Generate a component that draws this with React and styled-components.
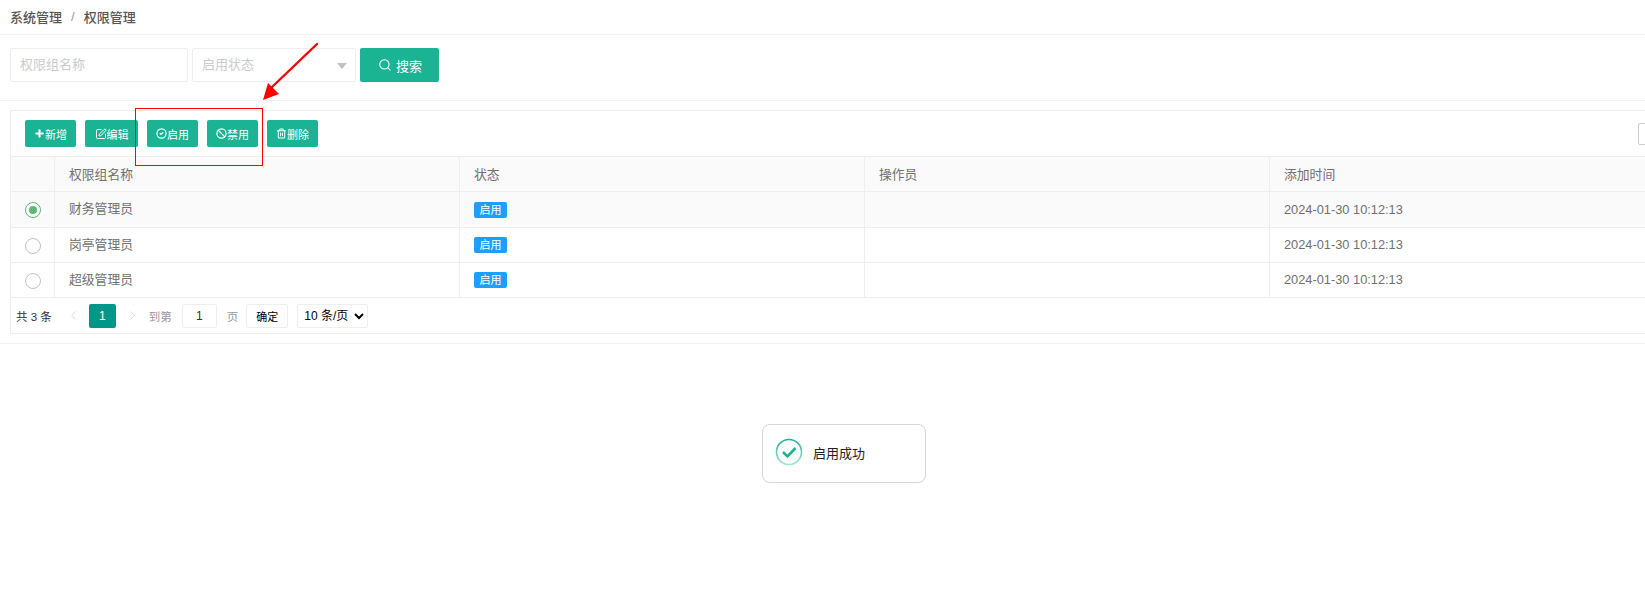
import React from 'react';
import styled, { createGlobalStyle } from 'styled-components';
import { Plus, SquarePen, CircleCheck, Ban, Trash2, Search, ChevronLeft, ChevronRight } from 'lucide-react';

const Global = createGlobalStyle`
  * { box-sizing: border-box; }
  html, body { margin: 0; padding: 0; background: #fff; height: 100%; overflow: hidden; }
  body { font-family: "Liberation Sans", "Noto Sans CJK SC", sans-serif; font-size: 13px; color: #666; }
`;

const Page = styled.div`
  position: relative;
  width: 1645px;
  height: 594px;
  overflow: hidden;
`;
const Breadcrumb = styled.div`
  height: 35px;
  padding: 0 10px 1px;
  border-bottom: 1px solid #f2f2f2;
  display: flex;
  align-items: center;
  font-size: 13px;
  color: #555;
`;
const Crumb = styled.span`font-weight: 500;`;
const CrumbSep = styled.span`
  margin: 0 9px 0 9px;
  color: #999;
`;
const SearchBar = styled.div`
  display: flex;
  gap: 4px;
  padding: 13px 10px 18px;
  border-bottom: 1px solid #f2f2f2;
  height: 66px;
`;
const TextInput = styled.input`
  width: ${p => p.$w}px;
  height: 34px;
  border: 1px solid #eee;
  border-radius: 2px;
  padding: 0 0 1px 9px;
  font: 13px "Liberation Sans", "Noto Sans CJK SC", sans-serif;
  outline: none;
  &::placeholder { color: #ccc; opacity: 1; }
`;
const SelectWrap = styled.div`
  position: relative;
  display: flex;
`;
const Caret = styled.i`
  position: absolute;
  right: 9px;
  top: 15px;
  border: 5.5px solid transparent;
  border-top: 6px solid #c2c2c2;
  border-bottom: 0;
`;
const SearchButton = styled.button`
  width: 79px;
  height: 34px;
  background: #1ab394;
  color: #fff;
  border: 0;
  border-radius: 2px;
  display: flex;
  align-items: center;
  justify-content: center;
  gap: 4px;
  font: 13px "Liberation Sans", "Noto Sans CJK SC", sans-serif;
  padding: 0 0 0 1px;
`;
const Section = styled.div`
  padding: 9px 0 9px 10px;
  border-bottom: 1px solid #f2f2f2;
`;
const Card = styled.div`
  width: 1680px;
  border: 1px solid #eee;
`;
const Toolbar = styled.div`
  display: flex;
  align-items: center;
  gap: 9px;
  height: 45px;
  padding-left: 14px;
  position: relative;
`;
const ToolButton = styled.button`
  width: ${p => p.$w || 51}px;
  height: 27px;
  background: #1ab394;
  color: #fff;
  border: 0;
  border-radius: 2px;
  padding: 0;
  display: flex;
  align-items: center;
  justify-content: center;
  font: 11px "Liberation Sans", "Noto Sans CJK SC", sans-serif;
`;
const ColumnsToggle = styled.div`
  position: absolute;
  left: 1627px;
  top: 12px;
  width: 30px;
  height: 22px;
  border: 1px solid #ccc;
  border-radius: 2px;
`;
const Row = styled.div`
  display: grid;
  grid-template-columns: 44px 405px 405px 405px 405px;
  height: ${p => p.$h}px;
  border-top: ${p => (p.$top ? '1px solid #eee' : '0')};
  border-bottom: 1px solid #eee;
  background: ${p => (p.$shaded ? '#fafafa' : '#fff')};
`;
const Cell = styled.div`
  display: flex;
  align-items: center;
  padding-left: ${p => (p.$center ? 0 : 14)}px;
  padding-bottom: ${p => (p.$center ? 0 : p.$lift || 0)}px;
  justify-content: ${p => (p.$center ? 'center' : 'flex-start')};
  border-right: 1px solid #eee;
  font-size: 12.8px;
  color: #707070;
`;
const Radio = styled.span`
  width: 16px;
  height: 16px;
  margin-top: 1px;
  border-radius: 50%;
  border: 1px solid ${p => (p.$on ? '#5fb878' : '#c2c2c2')};
  background: #fff;
  display: flex;
  align-items: center;
  justify-content: center;
  &::after {
    content: '';
    display: ${p => (p.$on ? 'block' : 'none')};
    width: 8px;
    height: 8px;
    border-radius: 50%;
    background: #5fb878;
  }
`;
const Badge = styled.span`
  width: 33px;
  height: 16px;
  background: #1e9fff;
  color: #fff;
  border-radius: 2px;
  font-size: 11px;
  line-height: 16px;
  text-align: center;
`;
const Pager = styled.div`
  height: 35px;
  display: flex;
  align-items: center;
  padding-left: 5px;
  font-size: 11px;
  color: #333;
`;
const PagerText = styled.span`
  color: ${p => p.$c || '#999'};
  margin-left: ${p => p.$ml || 0}px;
  font-size: 11.5px;
`;
const Arrow = styled.span`
  display: flex;
  margin-left: ${p => p.$ml}px;
  color: #ccc;
`;
const CurrentPage = styled.span`
  width: 27px;
  height: 24px;
  margin-left: 8px;
  background: #009688;
  color: #fff;
  border-radius: 2px;
  display: flex;
  align-items: center;
  justify-content: center;
  font-size: 12px;
`;
const PageInput = styled.input`
  width: 35px;
  height: 24px;
  margin-left: 10px;
  border: 1px solid #eee;
  border-radius: 2px;
  text-align: center;
  font: 12px "Liberation Sans", sans-serif;
  color: #333;
  padding: 0;
  outline: none;
`;
const Confirm = styled.button`
  width: 42px;
  height: 24px;
  margin-left: 8px;
  background: #fff;
  border: 1px solid #eee;
  border-radius: 2px;
  font: 11px "Liberation Sans", "Noto Sans CJK SC", sans-serif;
  color: #000;
  padding: 0;
`;
const PageSize = styled.select`
  width: 71px;
  height: 24px;
  margin-left: 9px;
  background: #fff;
  border: 1px solid #eee;
  border-radius: 2px;
  font: 12px "Liberation Sans", "Noto Sans CJK SC", sans-serif;
  color: #000;
  padding: 0 0 0 2px;
  outline: none;
`;
const Highlight = styled.div`
  position: absolute;
  left: 135px;
  top: 108px;
  width: 128px;
  height: 58px;
  border: 1px solid #f00;
  pointer-events: none;
`;
const ArrowMark = styled.svg`
  position: absolute;
  left: 255px;
  top: 36px;
`;
const Toast = styled.div`
  position: absolute;
  left: 762px;
  top: 424px;
  width: 164px;
  height: 59px;
  background: #fff;
  border: 1px solid #d6d6d6;
  border-radius: 8px;
  display: flex;
  align-items: center;
  padding: 0 0 3px 12px;
  gap: 10px;
  font-size: 13px;
  color: #222;
`;

const rows = [
  { name: '财务管理员', on: true, h: 36 },
  { name: '岗亭管理员', h: 35 },
  { name: '超级管理员', h: 35 },
];

const tools = [
  { label: '新增', Icon: Plus, w: 51, sw: 4.5, s: 11 },
  { label: '编辑', Icon: SquarePen, w: 53, sw: 2, s: 12 },
  { label: '启用', Icon: CircleCheck, w: 51, sw: 2.6, s: 11 },
  { label: '禁用', Icon: Ban, w: 51, sw: 2.6, s: 11 },
  { label: '删除', Icon: Trash2, w: 51, sw: 2.2, s: 11 },
];

export default function App() {
  return (
    <Page>
      <Global />
      <Breadcrumb>
        <Crumb>系统管理</Crumb>
        <CrumbSep>/</CrumbSep>
        <Crumb>权限管理</Crumb>
      </Breadcrumb>
      <SearchBar>
        <TextInput $w={178} placeholder="权限组名称" />
        <SelectWrap>
          <TextInput $w={164} placeholder="启用状态" readOnly />
          <Caret />
        </SelectWrap>
        <SearchButton><Search size={14} strokeWidth={1.8} />搜索</SearchButton>
      </SearchBar>
      <Section>
        <Card>
          <Toolbar>
            {tools.map(({ label, Icon, w, sw, s }) => (
              <ToolButton key={label} $w={w}><Icon size={s} strokeWidth={sw} />{label}</ToolButton>
            ))}
            <ColumnsToggle />
          </Toolbar>
          <Row $h={36} $top $shaded>
            <Cell $center />
            <Cell $lift={2}>权限组名称</Cell>
            <Cell $lift={2}>状态</Cell>
            <Cell $lift={2}>操作员</Cell>
            <Cell $lift={2}>添加时间</Cell>
          </Row>
          {rows.map(r => (
            <Row key={r.name} $h={r.h} $shaded={r.on}>
              <Cell $center><Radio $on={r.on} /></Cell>
              <Cell $lift={4}>{r.name}</Cell>
              <Cell><Badge>启用</Badge></Cell>
              <Cell />
              <Cell $lift={1}>2024-01-30 10:12:13</Cell>
            </Row>
          ))}
          <Pager>
            <PagerText $c="#333">共 3 条</PagerText>
            <Arrow $ml={14}><ChevronLeft size={15} strokeWidth={1.2} /></Arrow>
            <CurrentPage>1</CurrentPage>
            <Arrow $ml={9}><ChevronRight size={15} strokeWidth={1.2} /></Arrow>
            <PagerText $ml={9}>到第</PagerText>
            <PageInput defaultValue="1" />
            <PagerText $ml={10}>页</PagerText>
            <Confirm>确定</Confirm>
            <PageSize defaultValue="10">
              <option value="10">10 条/页</option>
              <option value="20">20 条/页</option>
            </PageSize>
          </Pager>
        </Card>
      </Section>
      <Highlight />
      <ArrowMark width="70" height="70" viewBox="0 0 70 70">
        <line x1="62" y1="8" x2="16" y2="52" stroke="#f00" strokeWidth="2.4" strokeLinecap="round" />
        <polygon points="8,64 13,47 24,58" fill="#f00" />
      </ArrowMark>
      <Toast>
        <svg width="28" height="28" viewBox="0 0 28 28">
          <defs>
            <linearGradient id="ring" x1="0" y1="0" x2="0" y2="1">
              <stop offset="0" stopColor="#1ab394" />
              <stop offset="1" stopColor="#a5e5d8" />
            </linearGradient>
          </defs>
          <circle cx="14" cy="14" r="12.5" fill="none" stroke="url(#ring)" strokeWidth="1.6" />
          <path d="M8 14l4.5 4.5L20.5 10" fill="none" stroke="#1ab394" strokeWidth="2.6" />
        </svg>
        启用成功
      </Toast>
    </Page>
  );
}
